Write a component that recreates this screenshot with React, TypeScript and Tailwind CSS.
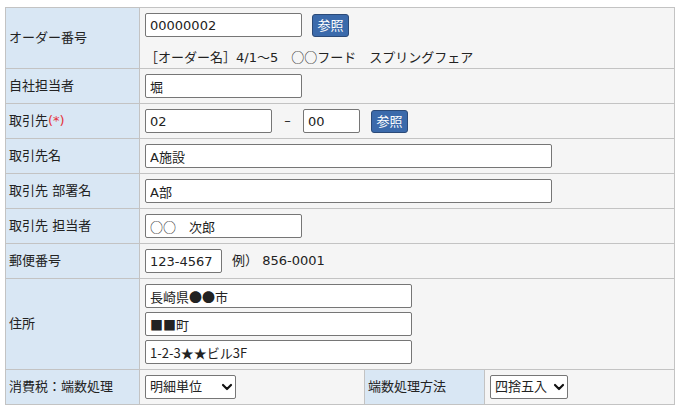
import { ChevronDown } from "lucide-react";

// Latin glyphs from DejaVu, kana/kanji from Noto CJK
const latin = "font-['DejaVu_Sans','Noto_Sans_CJK_JP',sans-serif]";
// fields holding symbols (●■★○) that need the full-width CJK shapes
const cjk = "font-['Noto_Sans_CJK_JP','DejaVu_Sans',sans-serif]";

const th =
  "border border-[#c3c3c3] bg-[#d9e7f4] pl-[3px] text-left align-middle font-normal leading-[18px]";
const td = "border border-[#c3c3c3] bg-[#f5f5f5] px-[5px] py-[5px] align-middle";

function Field({ value, className = "" }: { value: string; className?: string }) {
  return (
    <input
      readOnly
      value={value}
      className={`block h-[24px] rounded-[2px] border border-[#767676] bg-white px-[4px] text-[13px] text-[#222] outline-none ${className}`}
    />
  );
}

function RefButton() {
  return (
    <button
      type="button"
      className="h-[23px] w-[37px] rounded-[3px] border border-[#2b4a78] bg-[#3b6aab] text-[13px] leading-none text-white"
    >
      参照
    </button>
  );
}

function Dropdown({ value, className }: { value: string; className: string }) {
  return (
    <div className={`relative ${className}`}>
      <select
        defaultValue={value}
        className="block h-[24px] w-full appearance-none rounded-[2px] border border-[#767676] bg-white pl-[4px] text-[13px] text-[#222] outline-none"
      >
        <option>{value}</option>
      </select>
      <ChevronDown
        size={16}
        strokeWidth={3.2}
        className="pointer-events-none absolute right-[1px] top-1/2 -translate-y-1/2 text-[#111]"
      />
    </div>
  );
}

export default function App() {
  return (
    <div className={`min-h-[413px] bg-white pl-[5px] pt-[7px] text-[13px] text-[#222] ${latin}`}>
      <table className="w-[670px] table-fixed border-collapse">
        <colgroup>
          <col className="w-[134px]" />
          <col className="w-[225px]" />
          <col className="w-[120px]" />
          <col className="w-[190px]" />
        </colgroup>
        <tbody>
          <tr>
            <th className={th}>オーダー番号</th>
            <td colSpan={3} className="border border-[#c3c3c3] bg-[#f5f5f5] px-[5px] pb-[1px] pt-[5px] align-top">
              <div className="flex items-center gap-[10px]">
                <Field value="00000002" className="w-[157px]" />
                <RefButton />
              </div>
              <div className="mt-[11px] leading-[18px]">
                ［オーダー名］4/1～5　<span className={cjk}>○○</span>フード　スプリングフェア
              </div>
            </td>
          </tr>
          <tr>
            <th className={th}>自社担当者</th>
            <td colSpan={3} className={td}>
              <Field value="堀" className="w-[157px]" />
            </td>
          </tr>
          <tr>
            <th className={th}>
              取引先<span className="text-[#e5323a]">(*)</span>
            </th>
            <td colSpan={3} className={td}>
              <div className="flex items-center">
                <Field value="02" className="w-[127px]" />
                <span className="w-[31px] text-center">–</span>
                <Field value="00" className="w-[57px]" />
                <div className="ml-[11px]">
                  <RefButton />
                </div>
              </div>
            </td>
          </tr>
          <tr>
            <th className={th}>取引先名</th>
            <td colSpan={3} className={td}>
              <Field value="A施設" className="w-[407px]" />
            </td>
          </tr>
          <tr>
            <th className={th}>取引先 部署名</th>
            <td colSpan={3} className={td}>
              <Field value="A部" className="w-[407px]" />
            </td>
          </tr>
          <tr>
            <th className={th}>取引先 担当者</th>
            <td colSpan={3} className={td}>
              <Field value="○○　次郎" className={`w-[157px] ${cjk}`} />
            </td>
          </tr>
          <tr>
            <th className={th}>郵便番号</th>
            <td colSpan={3} className={td}>
              <div className="flex items-center">
                <Field value="123-4567" className="w-[77px]" />
                <span className="ml-[10px] leading-[18px]">例） 856-0001</span>
              </div>
            </td>
          </tr>
          <tr>
            <th className={th}>住所</th>
            <td colSpan={3} className={td}>
              <div className="flex flex-col gap-[4px]">
                <Field value="長崎県●●市" className={`w-[267px] ${cjk}`} />
                <Field value="■■町" className={`w-[267px] ${cjk}`} />
                <Field value="1-2-3★★ビル3F" className={`w-[267px] ${cjk}`} />
              </div>
            </td>
          </tr>
          <tr>
            <th className={th}>消費税：端数処理</th>
            <td className={td}>
              <Dropdown value="明細単位" className="w-[91px]" />
            </td>
            <th className={th}>端数処理方法</th>
            <td className={td}>
              <Dropdown value="四捨五入" className="w-[78px]" />
            </td>
          </tr>
        </tbody>
      </table>
    </div>
  );
}
